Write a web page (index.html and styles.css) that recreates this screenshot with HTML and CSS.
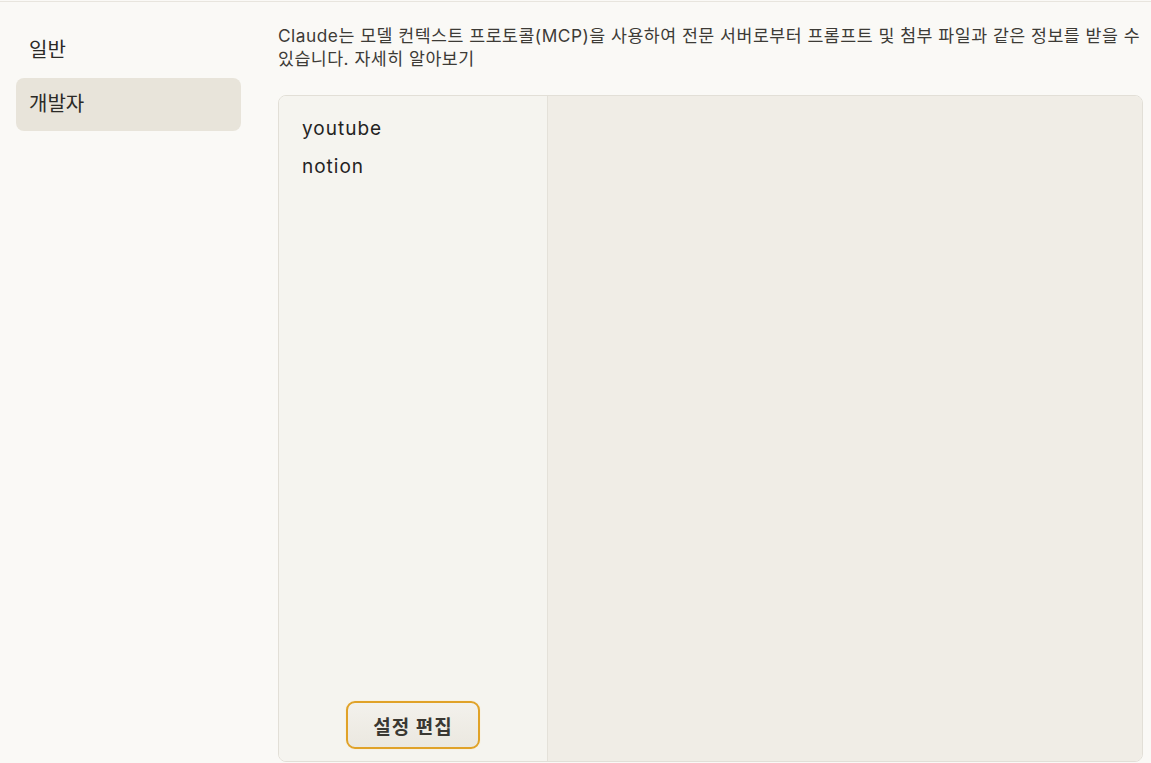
FILE: index.html
```html
<!DOCTYPE html>
<html lang="ko">
<head>
  <meta charset="utf-8">
  <title>설정</title>
  <link rel="stylesheet" href="styles.css">
</head>
<body>
<div class="page">
  <nav class="sidebar">
    <div class="nav-item">일반</div>
    <div class="nav-item active">개발자</div>
  </nav>
  <main class="content">
    <p class="intro">Claude는 모델 컨텍스트 프로토콜(MCP)을 사용하여 전문 서버로부터 프롬프트 및 첨부 파일과 같은 정보를 받을 수 있습니다. <a href="#">자세히 알아보기</a></p>
    <div class="panel">
      <div class="server-list">
        <ul class="servers">
          <li>youtube</li>
          <li>notion</li>
        </ul>
        <div class="actions">
          <button class="edit-btn">설정 편집</button>
        </div>
      </div>
      <div class="server-detail"></div>
    </div>
  </main>
</div>
</body>
</html>
```

FILE: styles.css
```css
html, body {
  margin: 0;
  height: 100%;
}

body {
  background: #faf9f6;
  color: #2b2a27;
  font-family: Inter, "Noto Sans CJK KR", sans-serif;
  padding-top: 1px;
  box-sizing: border-box;
}

.page {
  border-top: 1px solid #e8e5de;
  height: 100%;
  box-sizing: border-box;
  display: grid;
  grid-template-columns: 225px 1fr;
  gap: 37px;
  padding: 0 8px 0 16px;
}

.sidebar {
  padding-top: 22px;
  display: flex;
  flex-direction: column;
  gap: 1px;
}

.nav-item {
  height: 53px;
  line-height: 53px;
  padding-left: 13px;
  font-size: 20px;
  border-radius: 8px;
  color: #2b2a27;
}

.nav-item.active {
  background: #e8e4da;
}

.content {
  display: flex;
  flex-direction: column;
  min-height: 0;
}

.intro {
  margin: 22px 0 25px;
  font-size: 17.3px;
  letter-spacing: 0.5px;
  line-height: 23px;
  color: #3d3b36;
}

.intro a {
  color: inherit;
  text-decoration: none;
}

.panel {
  flex: 1;
  display: flex;
  border: 1px solid #e2dfd7;
  border-radius: 8px;
  overflow: hidden;
  margin-bottom: 1px;
}

.server-list {
  width: 268px;
  background: #f5f4ef;
  border-right: 1px solid #e4e1d9;
  display: flex;
  flex-direction: column;
}

.servers {
  list-style: none;
  margin: 0;
  padding: 14px 0 0 23px;
  flex: 1;
}

.servers li {
  height: 38px;
  line-height: 38px;
  font-size: 19px;
  letter-spacing: 1px;
  color: #24231f;
}

.actions {
  display: flex;
  justify-content: center;
  padding-bottom: 12px;
}

.edit-btn {
  width: 134px;
  height: 48px;
  border: 2px solid #e0a228;
  border-radius: 9px;
  background: linear-gradient(#f3f1ec, #ebe8e0);
  font-family: inherit;
  font-size: 19px;
  font-weight: bold;
  letter-spacing: 1px;
  color: #3a3832;
  box-shadow: 0 0 0 1px #f7f1e3;
}

.server-detail {
  flex: 1;
  background: #f0ede6;
}
```
